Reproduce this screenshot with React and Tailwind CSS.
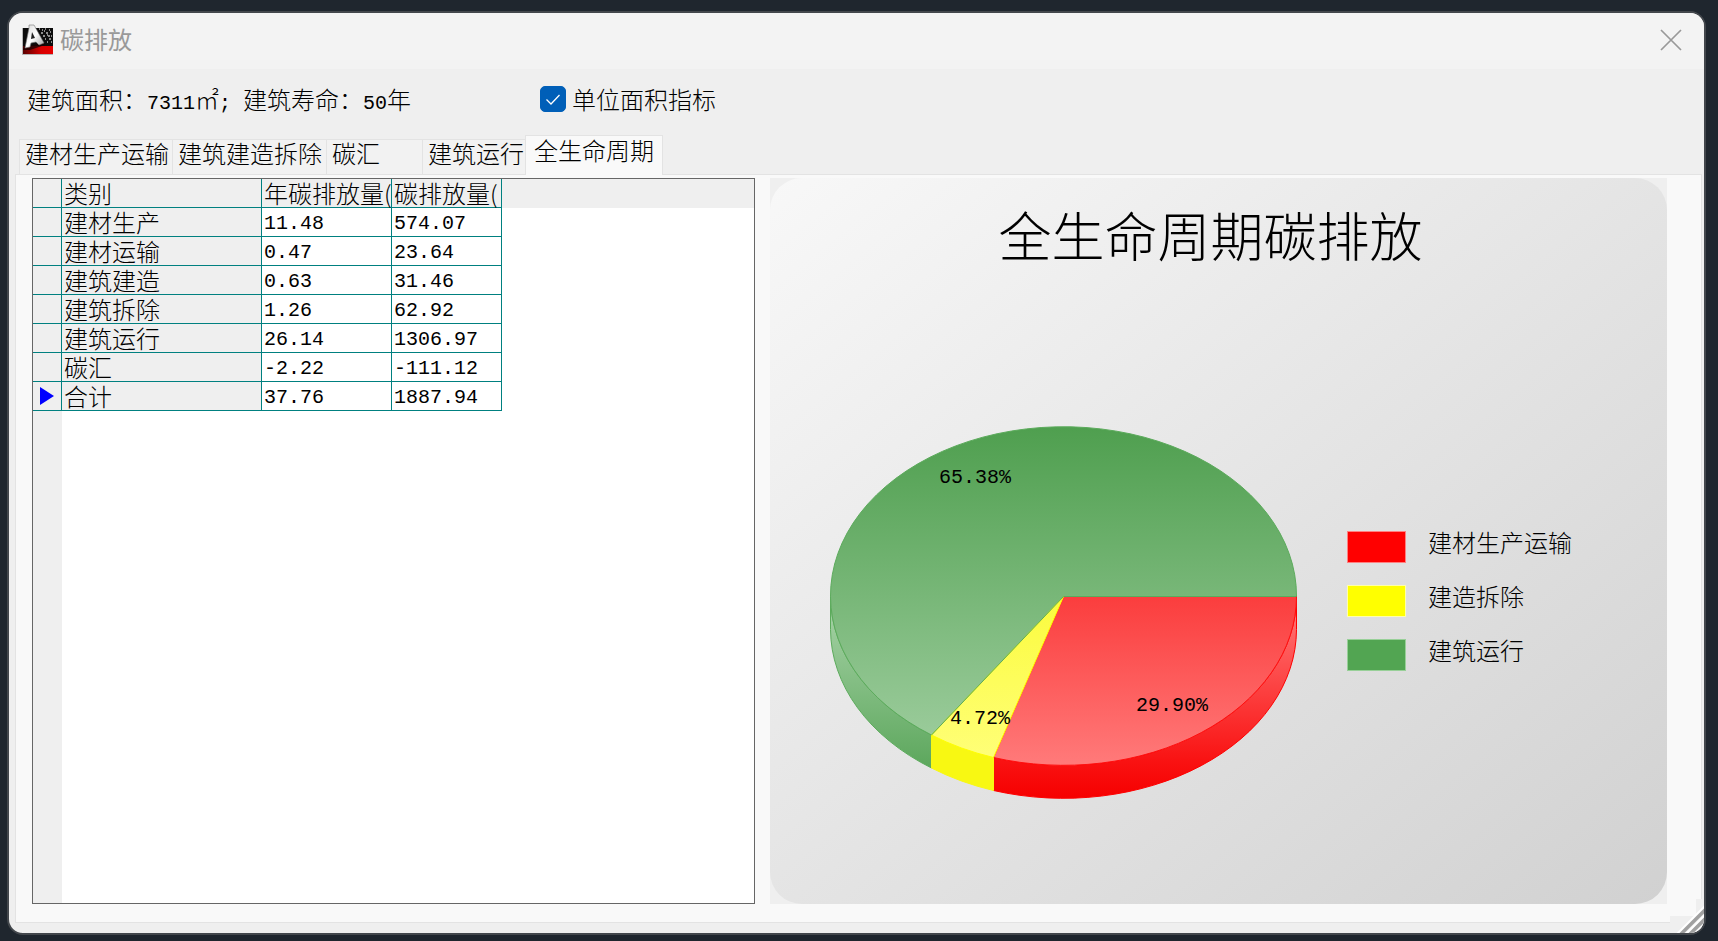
import { useState } from "react";
import clsx from "clsx";

const TABS = [
  { id: "materials", label: "建材生产运输", width: "w-[153px]" },
  { id: "construction", label: "建筑建造拆除", width: "w-[154px]" },
  { id: "sink", label: "碳汇", width: "w-[96px]" },
  { id: "operation", label: "建筑运行", width: "w-[103px]" },
  { id: "lifecycle", label: "全生命周期", width: "w-[138px]" },
];

const ROWS = [
  { name: "建材生产", yearly: "11.48", total: "574.07" },
  { name: "建材运输", yearly: "0.47", total: "23.64" },
  { name: "建筑建造", yearly: "0.63", total: "31.46" },
  { name: "建筑拆除", yearly: "1.26", total: "62.92" },
  { name: "建筑运行", yearly: "26.14", total: "1306.97" },
  { name: "碳汇", yearly: "-2.22", total: "-111.12" },
  { name: "合计", yearly: "37.76", total: "1887.94" },
];

const LEGEND = [
  { label: "建材生产运输", swatch: "bg-[#ff0000] border-[#ff8080]" },
  { label: "建造拆除", swatch: "bg-[#ffff00] border-[#ffffa8]" },
  { label: "建筑运行", swatch: "bg-[#52a552] border-[#98d098]" },
];

const Num = ({ className, children }) => (
  <span className={clsx("font-['Liberation_Mono',monospace] text-xl leading-6", className)}>{children}</span>
);

const AppIcon = () => (
  <svg width="32" height="32" viewBox="0 0 32 32" aria-hidden="true">
    <defs>
      <linearGradient id="letter" x1="0" y1="0" x2="1" y2="1">
        <stop offset="0" stopColor="#d8d8d8" />
        <stop offset="0.5" stopColor="#ffffff" />
        <stop offset="1" stopColor="#9a9a9a" />
      </linearGradient>
      <linearGradient id="base" x1="0" y1="0" x2="1" y2="0">
        <stop offset="0" stopColor="#5a0000" />
        <stop offset="0.6" stopColor="#d80000" />
        <stop offset="1" stopColor="#e60000" />
      </linearGradient>
    </defs>
    <rect x="0" y="4" width="31" height="27" fill="#b5b5b5" />
    <rect x="1" y="4" width="30" height="18" fill="#0c0c0c" />
    <rect x="1" y="22" width="30" height="8" fill="url(#base)" />
    <path d="M17 5h1M20 6h1M23 5h1M27 6h1M19 9h2M24 9h2M28 8h1M21 12h2M26 12h2M23 15h1M27 15h2M25 18h1M29 18h1M22 7h1M25 11h1M29 12h1" stroke="#b5b5b5" strokeWidth="1.5" />
    <path d="M2 22 22 19 23 21 8 26 1 26Z" fill="#1a0000" opacity="0.8" />
    <path d="M7 1 12 1 22 19 17 21 14 18 9 19 8 23 3 24 7 4Z" fill="url(#letter)" stroke="#777" strokeWidth="0.6" />
    <path d="M10 8 13 14 9 15Z" fill="#222" />
  </svg>
);

const PieChart = () => (
  <svg width="470" height="374" viewBox="0 0 470 374" className="shrink-0" role="img" aria-label="全生命周期碳排放">
    <defs>
      <linearGradient id="greenTop" gradientUnits="userSpaceOnUse" x1="0" y1="1" x2="0" y2="339">
        <stop offset="0" stopColor="#4f9f4f" />
        <stop offset="1" stopColor="#a1cfa1" />
      </linearGradient>
      <linearGradient id="redTop" gradientUnits="userSpaceOnUse" x1="0" y1="1" x2="0" y2="339">
        <stop offset="0" stopColor="#f70000" />
        <stop offset="1" stopColor="#ff7a7a" />
      </linearGradient>
      <linearGradient id="yellowTop" gradientUnits="userSpaceOnUse" x1="0" y1="1" x2="0" y2="339">
        <stop offset="0" stopColor="#f7f700" />
        <stop offset="1" stopColor="#ffff7a" />
      </linearGradient>
      <linearGradient id="greenSide" gradientUnits="userSpaceOnUse" x1="0" y1="190" x2="0" y2="372">
        <stop offset="0" stopColor="#a1cfa1" />
        <stop offset="1" stopColor="#4f9f4f" />
      </linearGradient>
      <linearGradient id="redSide" gradientUnits="userSpaceOnUse" x1="0" y1="190" x2="0" y2="372">
        <stop offset="0" stopColor="#ff7070" />
        <stop offset="0.8" stopColor="#f91212" />
        <stop offset="1" stopColor="#f60000" />
      </linearGradient>
    </defs>
    <g strokeWidth="1" strokeLinejoin="round">
      <path d="M1.5 170.5V203.5A233 169 0 0 0 102.5 342V309A233 169 0 0 1 1.5 170.5Z" fill="url(#greenSide)" stroke="#5cab5c" />
      <path d="M164.5 331.5V364.5A233 169 0 0 0 467.5 203.5V170.5A233 169 0 0 1 164.5 331.5Z" fill="url(#redSide)" stroke="#ff0000" />
      <path d="M102.5 309V342A233 169 0 0 0 164.5 364.5V331.5A233 169 0 0 1 102.5 309Z" fill="#f8f812" stroke="#f8f812" />
      <path d="M234.5 170.5 102.5 309A233 169 0 1 1 467.5 170.5Z" fill="url(#greenTop)" stroke="#5cab5c" />
      <path d="M234.5 170.5H467.5A233 169 0 0 1 164.5 331.5Z" fill="url(#redTop)" stroke="#ff1010" />
      <path d="M234.5 170.5 164.5 331.5A233 169 0 0 1 102.5 309Z" fill="url(#yellowTop)" stroke="#ffff00" />
      <path d="M102.5 309 234.5 170.5H467.5" fill="none" stroke="#5cab5c" />
    </g>
    <g className="fill-black font-['Liberation_Mono',monospace] text-xl">
      <text x="110" y="57">65.38%</text>
      <text x="307" y="285">29.90%</text>
      <text x="121" y="298">4.72%</text>
    </g>
  </svg>
);

const EmissionTable = () => (
  <div className="flex flex-col overflow-hidden border border-[#666666] bg-white">
    <div className="flex">
      <table className="w-[469px] shrink-0 table-fixed border-separate border-spacing-0 text-left">
        <colgroup>
          <col className="w-[29px]" />
          <col className="w-[200px]" />
          <col className="w-[130px]" />
          <col className="w-[110px]" />
        </colgroup>
        <thead>
          <tr className="bg-[#efefef]">
            {["", "类别", "年碳排放量(", "碳排放量("].map((title, i) => (
              <th key={i} className="h-[29px] border-r border-b border-[#008080] p-0 pl-0.5 leading-7 font-light whitespace-nowrap">
                {title}
              </th>
            ))}
          </tr>
        </thead>
        <tbody>
          {ROWS.map((row, i) => (
            <tr key={row.name}>
              <td className="h-[29px] border-r border-b border-[#008080] bg-[#efefef] p-0">
                {i === ROWS.length - 1 && (
                  <svg width="14" height="18" viewBox="0 0 14 18" className="ml-[7px]">
                    <path d="M0 0 14 9 0 18Z" fill="#0000ff" />
                  </svg>
                )}
              </td>
              <td className="border-r border-b border-[#008080] bg-[#efefef] p-0 pl-0.5 leading-7">{row.name}</td>
              <td className="border-r border-b border-[#008080] p-0 pl-0.5"><Num className="block pt-1">{row.yearly}</Num></td>
              <td className="border-r border-b border-[#008080] p-0 pl-0.5"><Num className="block pt-1">{row.total}</Num></td>
            </tr>
          ))}
        </tbody>
      </table>
      <div className="h-[29px] flex-1 bg-[#efefef]" />
    </div>
    <div className="w-[29px] flex-1 bg-[#efefef]" />
  </div>
);

const ChartPanel = () => (
  <div className="bg-[#efefef]">
    <div className="h-full rounded-[32px] bg-linear-to-br from-[#f8f8f8] to-[#d1d1d1] pt-6">
      <h2 className="pr-4 text-center text-[53px] leading-16 font-light">全生命周期碳排放</h2>
      <div className="mt-40 flex items-center pl-[59px]">
        <PieChart />
        <ul className="ml-12 pb-6">
          {LEGEND.map((item) => (
            <li key={item.label} className="flex h-[54px] items-center gap-[22px]">
              <span className={clsx("h-8 w-[59px] border", item.swatch)} />
              <span className="pb-2.5 leading-8 whitespace-nowrap">{item.label}</span>
            </li>
          ))}
        </ul>
      </div>
    </div>
  </div>
);

const App = () => {
  const [activeTab, setActiveTab] = useState("lifecycle");
  const [perArea, setPerArea] = useState(true);

  return (
    <div className="flex min-h-screen flex-col bg-[#1f262e] pt-[11px] pr-3 pb-1.5 pl-[7px] font-['Noto_Sans_CJK_SC',sans-serif] text-2xl font-light text-black">
      <div className="relative flex flex-1 flex-col overflow-hidden rounded-2xl border-2 border-[#43474c] bg-[#efefef]">
        <header className="flex h-14 items-center bg-[#f3f3f3] pr-[22px] pb-0.5 pl-[13px]">
          <AppIcon />
          <h1 className="ml-1.5 flex-1 pb-0.5 text-2xl font-normal text-[#999999]">碳排放</h1>
          <button type="button" aria-label="关闭">
            <svg width="22" height="22" viewBox="0 0 22 22" fill="none" stroke="#999999" strokeWidth="1.7">
              <path d="M1 1 21 21M21 1 1 21" />
            </svg>
          </button>
        </header>

        <div className="flex h-[60px] items-center pl-[18px]">
          <p className="w-[513px] whitespace-nowrap">
            建筑面积：<Num>7311</Num>㎡<Num>; </Num>建筑寿命：<Num>50</Num>年
          </p>
          <label className="flex items-center gap-1.5">
            <span className="relative size-[26px]">
              <input
                type="checkbox"
                checked={perArea}
                onChange={(e) => setPerArea(e.target.checked)}
                className="block size-[26px] appearance-none rounded-[5px] border border-[#888888] bg-white checked:border-[#005fb8] checked:bg-[#005fb8]"
              />
              {perArea && (
                <svg viewBox="0 0 26 26" className="pointer-events-none absolute inset-0" fill="none" stroke="#ffffff" strokeWidth="1.3">
                  <path d="M6.5 13.5 11 18 19.5 9" />
                </svg>
              )}
            </span>
            单位面积指标
          </label>
        </div>

        <div role="tablist" className="relative flex items-end pt-1.5 pl-2.5">
          {TABS.map((tab) => {
            const active = tab.id === activeTab;
            return (
              <button
                key={tab.id}
                type="button"
                role="tab"
                aria-selected={active}
                onClick={() => setActiveTab(tab.id)}
                className={clsx(
                  "border-t border-l border-[#e3e3e3] text-left leading-6 whitespace-nowrap last:border-r",
                  tab.width,
                  active ? "-mb-px h-10 bg-[#f9f9f9] pb-3 pl-2" : "h-[35px] bg-[#f2f2f2] pb-2 pl-[5px]"
                )}
              >
                {tab.label}
              </button>
            );
          })}
        </div>

        <main className="mr-0.5 mb-2.5 ml-1.5 grid flex-1 grid-cols-[723fr_897fr] gap-[15px] border border-[#e3e3e3] bg-[#f9f9f9] pt-[3px] pr-[34px] pb-[18px] pl-4">
          <EmissionTable />
          <ChartPanel />
        </main>

        <svg width="34" height="34" viewBox="0 0 34 34" className="absolute right-0 bottom-0" aria-hidden="true">
          <path d="M26 0H34V34H0V17H26Z" fill="#efefef" />
          <g strokeWidth="2">
            <path d="M7 35 35 7M16 35 35 16M25 35 35 25" stroke="#ffffff" />
            <path d="M10 35 35 10M12 35 35 12M19 35 35 19M21 35 35 21M28 35 35 28" stroke="#a0a0a0" />
          </g>
        </svg>
      </div>
    </div>
  );
};

export default App;
